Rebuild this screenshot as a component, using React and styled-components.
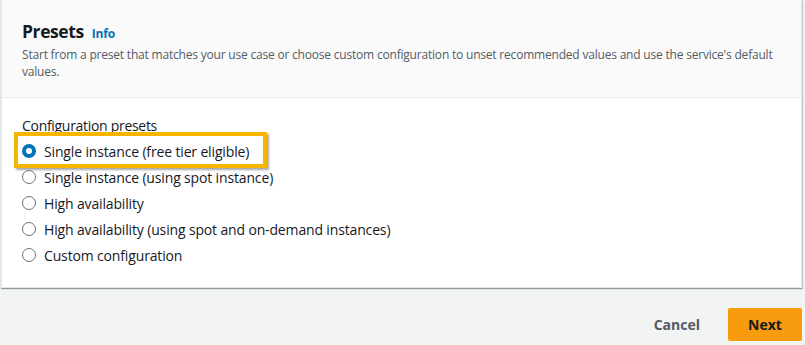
import React from "react";
import styled, { createGlobalStyle } from "styled-components";

const Global = createGlobalStyle`
  html, body { margin: 0; padding: 0; background: #f2f3f3; }
  body { font-family: "Open Sans", "Noto Sans", sans-serif; color: #16191f; }
  * { box-sizing: border-box; }
`;

const Page = styled.div`
  width: 805px;
  height: 345px;
  padding: 0 3px 0 1px;
  display: flex;
  flex-direction: column;
  overflow: hidden;
`;

const Card = styled.section`
  background: #fff;
  border: 1px solid #e3e5e6;
  border-top: none;
  box-shadow: 0 1px 1px 0 rgba(0, 28, 36, 0.3), 1px 1px 1px 0 rgba(0, 28, 36, 0.15);
  display: flex;
  flex-direction: column;
`;

const Header = styled.header`
  background: #fafafa;
  border-bottom: 1px solid #eaeded;
  height: 98px;
  padding: 20px 20px 0 20px;
`;

const TitleRow = styled.div`
  display: flex;
  align-items: baseline;
  gap: 8px;
`;

const Title = styled.h2`
  margin: 0;
  font-size: 17.5px;
  line-height: 22px;
  font-weight: 700;
  letter-spacing: -0.4px;
  color: #16191f;
`;

const InfoLink = styled.a`
  font-size: 12px;
  font-weight: 700;
  color: #0073bb;
  letter-spacing: -0.2px;
  text-decoration: none;
`;

const Description = styled.p`
  margin: 4px 0 0;
  font-size: 12px;
  line-height: 17px;
  color: #545b64;
  letter-spacing: -0.2px;
`;

const Body = styled.div`
  padding: 19px 20px 20px 20px;
  height: 189px;
`;

const FieldLabel = styled.div`
  font-size: 14px;
  line-height: 18px;
  color: #16191f;
  letter-spacing: -0.3px;
  margin-bottom: 3px;
`;

const RadioList = styled.div`
  display: flex;
  flex-direction: column;
  position: relative;
`;

const Option = styled.label`
  position: relative;
  display: flex;
  align-items: center;
  gap: 8px;
  height: 26px;
  font-size: 14px;
  color: #16191f;
  letter-spacing: -0.15px;
`;

const Circle = styled.span`
  width: 14px;
  height: 14px;
  border-radius: 50%;
  flex: none;
  border: ${(p) => (p.$checked ? "4px solid #0073bb" : "1.5px solid #687078")};
  background: #fff;
`;

const Highlight = styled.span`
  position: absolute;
  left: -8px;
  top: -6px;
  width: 253px;
  height: 36px;
  border: 4px solid #f7b500;
  box-shadow: 2px 2px 2px rgba(0, 0, 0, 0.35);
  pointer-events: none;
`;

const Footer = styled.footer`
  display: flex;
  justify-content: flex-end;
  align-items: center;
  gap: 20px;
  padding-top: 20px;
`;

const CancelButton = styled.button`
  border: none;
  background: transparent;
  font-family: inherit;
  font-size: 14px;
  font-weight: 700;
  color: #545b64;
  padding: 0 8px;
  height: 33px;
`;

const NextButton = styled.button`
  border: none;
  border-radius: 2px;
  background: #f89b0e;
  font-family: inherit;
  font-size: 14px;
  font-weight: 700;
  color: #16191f;
  width: 74px;
  height: 33px;
`;

const options = [
  "Single instance (free tier eligible)",
  "Single instance (using spot instance)",
  "High availability",
  "High availability (using spot and on-demand instances)",
  "Custom configuration",
];

export default function App() {
  return (
    <>
      <Global />
      <Page>
        <Card>
          <Header>
            <TitleRow>
              <Title>Presets</Title>
              <InfoLink href="#">Info</InfoLink>
            </TitleRow>
            <Description>
              Start from a preset that matches your use case or choose custom configuration to unset recommended values and use the service's default values.
            </Description>
          </Header>
          <Body>
            <FieldLabel>Configuration presets</FieldLabel>
            <RadioList>
              {options.map((o, i) => (
                <Option key={o}>
                  {i === 0 && <Highlight />}
                  <Circle $checked={i === 0} />
                  {o}
                </Option>
              ))}
            </RadioList>
          </Body>
        </Card>
        <Footer>
          <CancelButton>Cancel</CancelButton>
          <NextButton>Next</NextButton>
        </Footer>
      </Page>
    </>
  );
}
